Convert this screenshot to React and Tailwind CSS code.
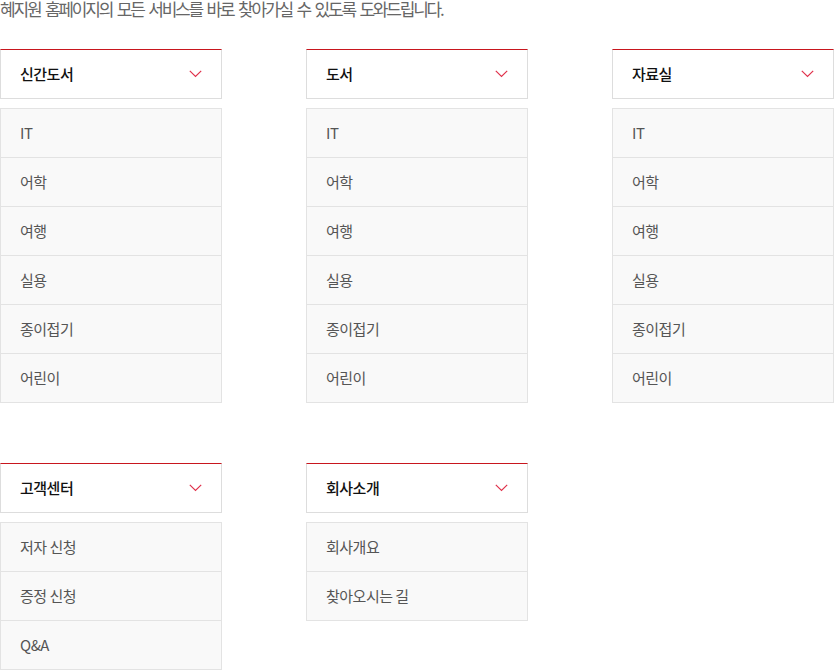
import React from "react";

const cats = ["IT", "어학", "여행", "실용", "종이접기", "어린이"];
const groups = [
  { title: "신간도서", items: cats },
  { title: "도서", items: cats },
  { title: "자료실", items: cats },
  { title: "고객센터", items: ["저자 신청", "증정 신청", "Q&A"] },
  { title: "회사소개", items: ["회사개요", "찾아오시는 길"] },
];

function Chevron() {
  return (
    <svg width="13" height="8" viewBox="0 0 13 8" fill="none">
      <path d="M0.8 0.8 L6.5 6.5 L12.2 0.8" stroke="#e0314b" strokeWidth="1.2" />
    </svg>
  );
}

function Group({ title, items }) {
  return (
    <div className="flex flex-col">
      <div className="h-[50px] border border-[#dddddd] border-t-[#c8161e] bg-white flex items-center justify-between pl-[19px] pr-[19px]">
        <span className="text-[15px] font-medium text-[#111111] tracking-[-0.5px]">{title}</span>
        <Chevron />
      </div>
      <div className="mt-[9px] border border-[#e3e3e3] bg-[#f9f9f9] flex flex-col">
        {items.map((it, i) => (
          <div
            key={i}
            className={
              "h-[48px] flex items-center pl-[19px] text-[15px] text-[#555555] tracking-[-0.5px] " +
              (i > 0 ? "border-t border-[#e3e3e3] h-[49px]" : "")
            }
          >
            {it}
          </div>
        ))}
      </div>
    </div>
  );
}

export default function App() {
  return (
    <div
      className="w-[834px] h-[670px] overflow-hidden bg-white"
      style={{ fontFamily: '"Noto Sans CJK KR", "Noto Sans", sans-serif' }}
    >
      <div className="h-[49px] overflow-hidden">
        <p className="text-[17px] leading-[17px] mt-[0px] text-[#666666] tracking-[-2.2px] [word-spacing:3px] whitespace-nowrap">
          혜지원 홈페이지의 모든 서비스를 바로 찾아가실 수 있도록 도와드립니다.
        </p>
      </div>
      <div className="grid grid-cols-[222px_222px_222px] gap-x-[84px] gap-y-[60px] items-start">
        {groups.map((g) => (
          <Group key={g.title} {...g} />
        ))}
      </div>
    </div>
  );
}
